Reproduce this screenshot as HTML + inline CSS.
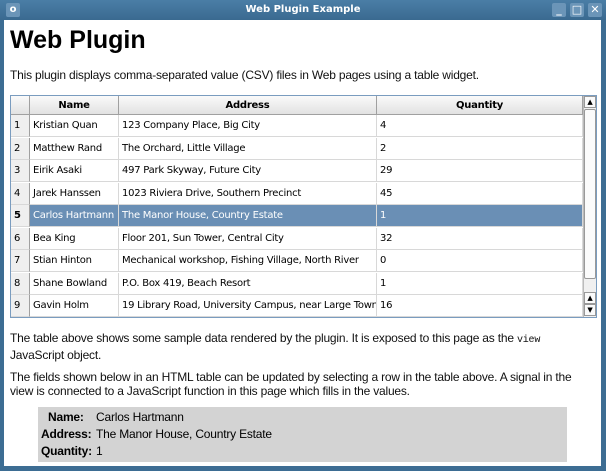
<!DOCTYPE html>
<html><head><style>
*{margin:0;padding:0;box-sizing:border-box}
body{width:606px;height:471px;background:#3d6d93;position:relative;overflow:hidden;font-family:"Liberation Sans",sans-serif}
.title{position:absolute;left:0;top:0;width:606px;height:20px;background:linear-gradient(#4a7ea6,#3a6a90);color:#fff;font:bold 10px "DejaVu Sans",sans-serif;text-align:center;line-height:19px}
.btn{position:absolute;top:3px;width:14px;height:14px;background:#6b95b8;border-radius:2px;color:#fff;font:bold 11px "DejaVu Sans",sans-serif;line-height:14px;text-align:center}
.content{position:absolute;left:4px;top:20px;width:597px;height:446px;background:#fff}
h1{position:absolute;left:10px;top:26px;font-size:25px;font-weight:bold;color:#000}
p{position:absolute;left:10px;font-size:12px;color:#111;line-height:14px;letter-spacing:-0.2px}
.tw{position:absolute;left:10px;top:95px;width:587px;height:223px;border:1px solid #7a9cbf;background:#fff;overflow:hidden;font-family:"DejaVu Sans",sans-serif;font-size:10px;letter-spacing:-0.25px}
.c{position:absolute;height:22px;line-height:22px;padding-left:3px;white-space:nowrap;overflow:hidden;border-right:1px solid #d8d8d8;border-bottom:1px solid #d8d8d8}
.h{position:absolute;top:0;height:19px;line-height:19px;text-align:center;font-weight:bold;background:linear-gradient(#fafafa,#e2e2e2);border-right:1px solid #a0a0a0;border-bottom:1px solid #a0a0a0}
.rn{background:#efefef;border-right:1px solid #a0a0a0}
.sel{background:#6a8fb5;color:#fff}
.sb{position:absolute;left:572px;top:0;width:13px;height:221px;background:#f0f0f0;border-left:1px solid #bbb}
.info{position:absolute;left:38px;top:407px;width:529px;height:55px;background:#d3d3d3;font-size:12px;letter-spacing:-0.2px}
.info div{position:absolute;white-space:nowrap}
</style></head><body>
<div class="title">Web Plugin Example</div>
<div class="btn" style="left:6px;font-size:10px">o</div>
<div class="btn" style="left:552px">_</div>
<div class="btn" style="left:570px">□</div>
<div class="btn" style="left:588px">✕</div>
<div class="content"></div>
<h1>Web Plugin</h1>
<p style="top:68px">This plugin displays comma-separated value (CSV) files in Web pages using a table widget.</p>
<div class="tw">
<div class="h" style="left:0;width:19px"></div>
<div class="h" style="left:19px;width:89px">Name</div>
<div class="h" style="left:108px;width:258px">Address</div>
<div class="h" style="left:366px;width:206px">Quantity</div>
<div id="rows"></div>
<div class="sb">
<div style="position:absolute;left:0;top:0;width:12px;height:12px;border:1px solid #999;background:#fafafa;font-size:7px;text-align:center;line-height:10px">▲</div>
<div style="position:absolute;left:0;top:13px;width:12px;height:170px;border:1px solid #999;background:#fbfbfb;border-radius:2px"></div>
<div style="position:absolute;left:0;top:196px;width:12px;height:12px;border:1px solid #999;background:#fafafa;font-size:7px;text-align:center;line-height:10px">▲</div>
<div style="position:absolute;left:0;top:208px;width:12px;height:12px;border:1px solid #999;background:#fafafa;font-size:7px;text-align:center;line-height:10px">▼</div>
</div>
</div>
<script>
var d=[["Kristian Quan","123 Company Place, Big City","4"],["Matthew Rand","The Orchard, Little Village","2"],["Eirik Asaki","497 Park Skyway, Future City","29"],["Jarek Hanssen","1023 Riviera Drive, Southern Precinct","45"],["Carlos Hartmann","The Manor House, Country Estate","1"],["Bea King","Floor 201, Sun Tower, Central City","32"],["Stian Hinton","Mechanical workshop, Fishing Village, North River","0"],["Shane Bowland","P.O. Box 419, Beach Resort","1"],["Gavin Holm","19 Library Road, University Campus, near Large Town","16"]];
var h="";
d.forEach(function(r,i){var t=19+i*22.5,s=i==4?" sel":"";
h+='<div class="c rn" style="left:0;width:19px;top:'+t+'px;'+(i==4?'font-weight:bold':'')+'">'+(i+1)+'</div>';
h+='<div class="c'+s+'" style="left:19px;width:89px;top:'+t+'px">'+r[0]+'</div>';
h+='<div class="c'+s+'" style="left:108px;width:258px;top:'+t+'px">'+r[1]+'</div>';
h+='<div class="c'+s+'" style="left:366px;width:206px;top:'+t+'px">'+r[2]+'</div>';});
document.getElementById("rows").innerHTML=h;
</script>
<p style="top:331px">The table above shows some sample data rendered by the plugin. It is exposed to this page as the <span style="font-family:'Liberation Mono',monospace;font-size:10px">view</span><br>JavaScript object.</p>
<p style="top:370px">The fields shown below in an HTML table can be updated by selecting a row in the table above. A signal in the<br>view is connected to a JavaScript function in this page which fills in the values.</p>
<div class="info">
<div style="left:10px;top:3px"><b>Name:</b></div><div style="left:58px;top:3px">Carlos Hartmann</div>
<div style="left:3px;top:20px"><b>Address:</b></div><div style="left:58px;top:20px">The Manor House, Country Estate</div>
<div style="left:3px;top:37px"><b>Quantity:</b></div><div style="left:58px;top:37px">1</div>
</div>
</body></html>
